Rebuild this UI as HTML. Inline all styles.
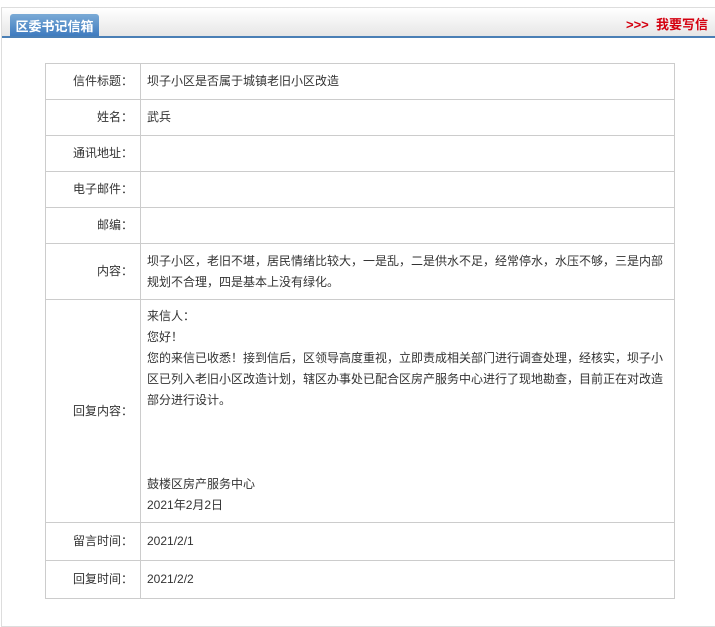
<!DOCTYPE html>
<html><head><meta charset="utf-8"><style>
body{margin:0;width:715px;height:614px;background:#fff;font-family:"Liberation Sans","Noto Sans CJK SC",sans-serif;font-size:12px;color:#333;position:relative;overflow:hidden}
.frame{position:absolute;left:1px;top:7px;width:730px;height:620px;border:1px solid #ddd;border-right:none;box-sizing:border-box}
.bar{position:absolute;left:2px;top:8px;width:713px;height:28px;background:linear-gradient(#fff,#e6e6e6);border-bottom:2px solid #4a7fb5}
.tab{position:absolute;left:10px;top:14px;width:89px;height:22px;background:linear-gradient(#7aaad6,#3e7bbf);border-radius:3px 3px 0 0;color:#fff;font-weight:bold;font-size:13px;line-height:25px;text-align:center}
.write{position:absolute;right:7px;top:16px;color:#d4000f;font-weight:bold;font-size:13px;line-height:18px}
table{position:absolute;left:45px;top:63px;width:630px;border-collapse:collapse}
td{border:1px solid #ccc;line-height:21px;padding:0 6px;vertical-align:middle}
td.l{width:81px;text-align:right;padding-right:7px}
</style></head><body>
<div class="frame"></div>
<div class="bar"></div>
<div class="tab">区委书记信箱</div>
<div class="write">&gt;&gt;&gt;&nbsp; 我要写信</div>
<table>
<tr style="height:36px"><td class="l">信件标题：</td><td>坝子小区是否属于城镇老旧小区改造</td></tr>
<tr style="height:36px"><td class="l">姓名：</td><td>武兵</td></tr>
<tr style="height:36px"><td class="l">通讯地址：</td><td></td></tr>
<tr style="height:36px"><td class="l">电子邮件：</td><td></td></tr>
<tr style="height:36px"><td class="l">邮编：</td><td></td></tr>
<tr style="height:56px"><td class="l">内容：</td><td>坝子小区，老旧不堪，居民情绪比较大，一是乱，二是供水不足，经常停水，水压不够，三是内部<br>规划不合理，四是基本上没有绿化。</td></tr>
<tr style="height:223px"><td class="l">回复内容：</td><td style="padding-top:5px;padding-bottom:6px">来信人：<br>您好！<br>您的来信已收悉！接到信后，区领导高度重视，立即责成相关部门进行调查处理，经核实，坝子小<br>区已列入老旧小区改造计划，辖区办事处已配合区房产服务中心进行了现地勘查，目前正在对改造<br>部分进行设计。<br><br><br><br>鼓楼区房产服务中心<br>2021年2月2日</td></tr>
<tr style="height:38px"><td class="l">留言时间：</td><td>2021/2/1</td></tr>
<tr style="height:38px"><td class="l">回复时间：</td><td>2021/2/2</td></tr>
</table>
</body></html>
